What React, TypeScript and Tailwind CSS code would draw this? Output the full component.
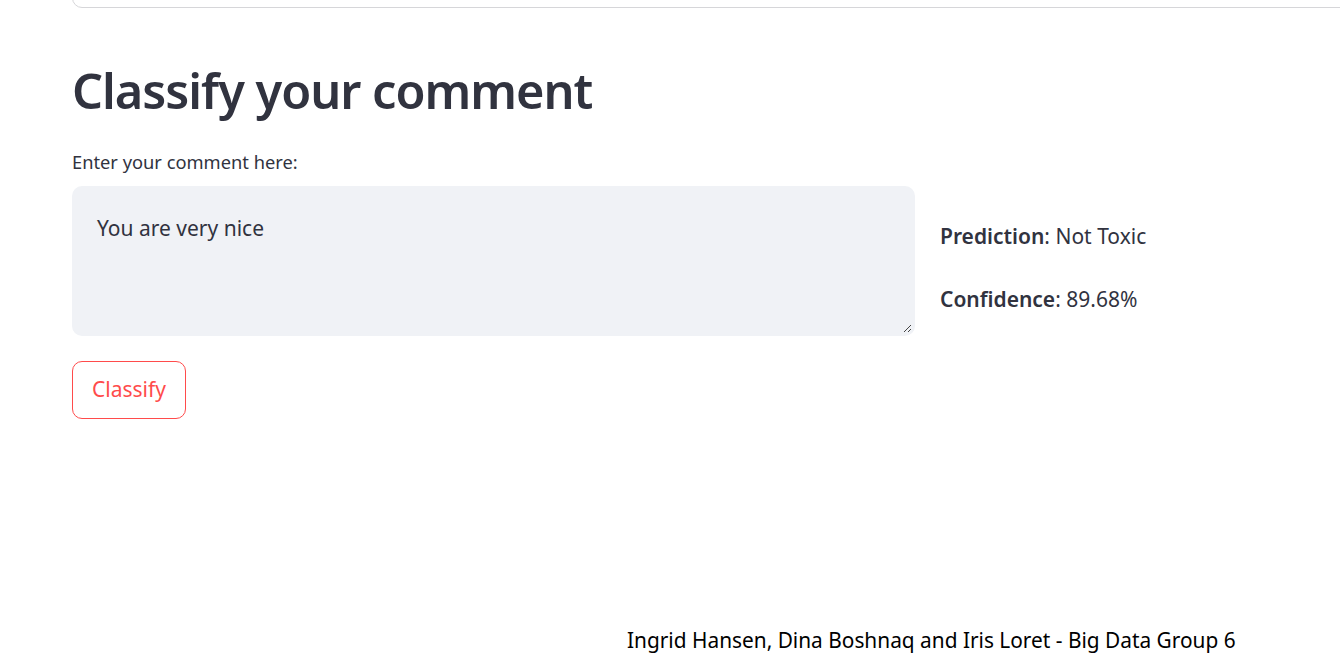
import React from "react";

export default function App() {
  const font = { fontFamily: '"Noto Sans", "Lato", sans-serif' };
  return (
    <div className="w-[1340px] h-[664px] overflow-hidden bg-white text-[#31333f]" style={font}>
      <div className="pl-[72px]">
        <div className="h-[20px] -mt-[12px] border border-[#d6d6d9] rounded-[10px] mr-[-20px]" />
      </div>
      <div className="pl-[72px] pr-[72px]">
        <h1 className="mt-[52px] text-[48.7px] leading-[60px] font-semibold tracking-[-1px] text-[#31333f]">
          Classify your comment
        </h1>
        <div className="mt-[31px] text-[18.3px] leading-[22px]">Enter your comment here:</div>
        <div className="mt-[13px] flex gap-[25px]">
          <div className="relative w-[843px] h-[150px] rounded-[10px] bg-[#f0f2f6] px-[25px] pt-[29px] text-[21px] leading-[26px]">
            You are very nice
            <svg className="absolute right-[3px] bottom-[3px]" width="10" height="10" viewBox="0 0 10 10">
              <path d="M9 2 L2 9 M9 6 L6 9" stroke="#444" strokeWidth="1" />
            </svg>
          </div>
          <div className="pt-[37px] text-[21px] leading-[26px]">
            <div>
              <span className="font-semibold">Prediction</span>: Not Toxic
            </div>
            <div className="mt-[37px]">
              <span className="font-semibold">Confidence</span>: 89.68%
            </div>
          </div>
        </div>
        <button className="mt-[25px] h-[58px] w-[114px] rounded-[10px] border border-[#ff4b4b] text-[#ff4b4b] text-[21px] bg-white">
          Classify
        </button>
      </div>
      <div className="mt-[208px] pl-[627px] text-[20.85px] leading-[26px] text-black">
        Ingrid Hansen, Dina Boshnaq and Iris Loret - Big Data Group 6
      </div>
    </div>
  );
}
